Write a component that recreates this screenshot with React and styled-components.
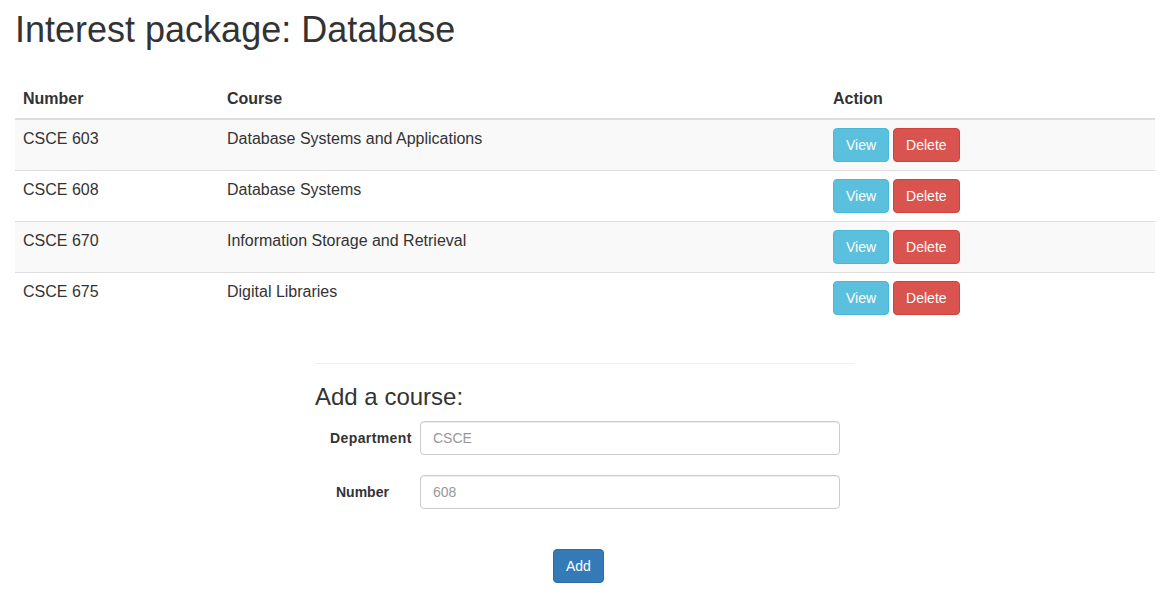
import React from "react";
import styled, { createGlobalStyle } from "styled-components";

const GlobalStyle = createGlobalStyle`
  * {
    box-sizing: border-box;
  }
  body {
    margin: 0;
    background: #fff;
    color: #333;
    font-family: "Liberation Sans", Arial, sans-serif;
    font-size: 14px;
    line-height: 1.42857143;
  }
`;

const Page = styled.div`
  width: 1170px;
  padding: 10px 15px 0;
`;

const Title = styled.h1`
  margin: 0 0 30px;
  font-size: 36px;
  font-weight: 500;
  line-height: 1.1;
`;

const Table = styled.table`
  width: 100%;
  border-collapse: collapse;
  border-spacing: 0;
  margin-bottom: 20px;
  font-size: 16px;
`;

const HeadCell = styled.th`
  width: ${(p) => p.$width || "auto"};
  padding: 8px;
  text-align: left;
  vertical-align: bottom;
  line-height: 1.42857143;
  font-weight: bold;
  border-bottom: 2px solid #ddd;
`;

const Row = styled.tr`
  background: ${(p) => (p.$striped ? "#f9f9f9" : "#fff")};
`;

const Cell = styled.td`
  padding: 8px;
  line-height: 1.42857143;
  vertical-align: top;
  border-top: 1px solid #ddd;
`;

const Button = styled.button`
  display: inline-block;
  margin: 0;
  padding: 6px 12px;
  font-family: inherit;
  font-size: 14px;
  line-height: 20px;
  color: #fff;
  border: 1px solid ${(p) => p.$border};
  border-radius: 4px;
  background: ${(p) => p.$bg};
  cursor: pointer;

  & + & {
    margin-left: 4px;
  }
`;

const Divider = styled.hr`
  width: 540px;
  margin: 40px 0 20px 300px;
  border: 0;
  border-top: 1px solid #eee;
`;

const Form = styled.form`
  width: 540px;
  margin-left: 300px;
  display: flex;
  flex-direction: column;
`;

const FormTitle = styled.h3`
  margin: 0 0 10px;
  font-size: 24px;
  font-weight: 500;
  line-height: 1.1;
`;

const FormGroup = styled.div`
  display: flex;
  align-items: center;
  margin-bottom: 20px;
`;

const Label = styled.label`
  width: 105px;
  flex-shrink: 0;
  padding-left: ${(p) => p.$indent}px;
  font-weight: bold;
  letter-spacing: ${(p) => p.$spacing || 0}px;
  white-space: nowrap;
`;

const Input = styled.input`
  width: 420px;
  height: 34px;
  padding: 6px 12px;
  font-family: inherit;
  font-size: 14px;
  color: #555;
  background: #fff;
  border: 1px solid #ccc;
  border-radius: 4px;
  box-shadow: inset 0 1px 1px rgba(0, 0, 0, 0.075);

  &::placeholder {
    color: #999;
  }
`;

const Submit = styled.div`
  padding: 20px 0 0 238px;
`;

const courses = [
  { number: "CSCE 603", name: "Database Systems and Applications" },
  { number: "CSCE 608", name: "Database Systems" },
  { number: "CSCE 670", name: "Information Storage and Retrieval" },
  { number: "CSCE 675", name: "Digital Libraries" },
];

const App = () => {
  return (
    <Page>
      <GlobalStyle />
      <Title>Interest package: Database</Title>
      <Table>
        <thead>
          <tr>
            <HeadCell $width="204px">Number</HeadCell>
            <HeadCell $width="606px">Course</HeadCell>
            <HeadCell>Action</HeadCell>
          </tr>
        </thead>
        <tbody>
          {courses.map((course, i) => (
            <Row key={course.number} $striped={i % 2 === 0}>
              <Cell>{course.number}</Cell>
              <Cell>{course.name}</Cell>
              <Cell>
                <Button type="button" $bg="#5bc0de" $border="#46b8da">
                  View
                </Button>
                <Button type="button" $bg="#d9534f" $border="#d43f3a">
                  Delete
                </Button>
              </Cell>
            </Row>
          ))}
        </tbody>
      </Table>

      <Divider />

      <Form onSubmit={(e) => e.preventDefault()}>
        <FormTitle>Add a course:</FormTitle>
        <FormGroup>
          <Label $indent={15} $spacing={0.4}>
            Department
          </Label>
          <Input placeholder="CSCE" />
        </FormGroup>
        <FormGroup>
          <Label $indent={21}>Number</Label>
          <Input placeholder="608" />
        </FormGroup>
        <Submit>
          <Button type="submit" $bg="#337ab7" $border="#2e6da4">
            Add
          </Button>
        </Submit>
      </Form>
    </Page>
  );
};

export default App;
